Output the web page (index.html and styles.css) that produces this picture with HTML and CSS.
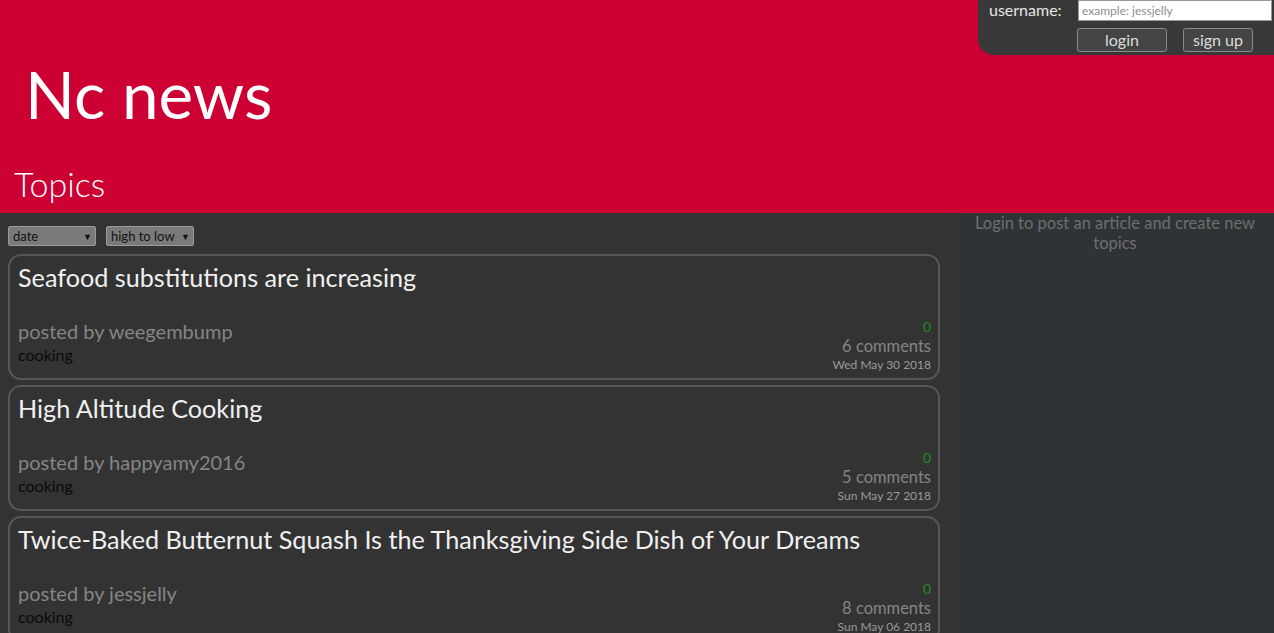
FILE: index.html
```html
<!DOCTYPE html>
<html>
<head>
<meta charset="utf-8">
<link rel="stylesheet" href="styles.css">
</head>
<body>
<header class="header">
  <h1 class="brand">Nc news</h1>
  <h2 class="topics">Topics</h2>
  <div class="login">
    <div class="login-row">
      <label class="login-label">username:</label>
      <input class="login-input" type="text" placeholder="example: jessjelly">
    </div>
    <div class="login-buttons">
      <button class="btn btn-login">login</button>
      <button class="btn btn-signup">sign up</button>
    </div>
  </div>
</header>
<div class="main">
  <section class="articles">
    <div class="sorts">
      <div class="select sel-date"><span>date</span><span class="arrow">&#9660;</span></div>
      <div class="select sel-order"><span>high to low</span><span class="arrow">&#9660;</span></div>
    </div>
    <article class="card">
      <h3 class="title">Seafood substitutions are increasing</h3>
      <div class="card-bottom">
        <div class="meta">
          <div class="author">posted by weegembump</div>
          <div class="topic">cooking</div>
        </div>
        <div class="stats">
          <div class="votes">0</div>
          <div class="comments">6 comments</div>
          <div class="date">Wed May 30 2018</div>
        </div>
      </div>
    </article>
    <article class="card">
      <h3 class="title">High Altitude Cooking</h3>
      <div class="card-bottom">
        <div class="meta">
          <div class="author">posted by happyamy2016</div>
          <div class="topic">cooking</div>
        </div>
        <div class="stats">
          <div class="votes">0</div>
          <div class="comments">5 comments</div>
          <div class="date">Sun May 27 2018</div>
        </div>
      </div>
    </article>
    <article class="card">
      <h3 class="title">Twice-Baked Butternut Squash Is the Thanksgiving Side Dish of Your Dreams</h3>
      <div class="card-bottom">
        <div class="meta">
          <div class="author">posted by jessjelly</div>
          <div class="topic">cooking</div>
        </div>
        <div class="stats">
          <div class="votes">0</div>
          <div class="comments">8 comments</div>
          <div class="date">Sun May 06 2018</div>
        </div>
      </div>
    </article>
  </section>
  <aside class="side">Login to post an article and create new topics</aside>
</div>
</body>
</html>
```
FILE: styles.css
```css
* { box-sizing: border-box; }
html, body { margin: 0; padding: 0; }
body {
  font-family: Lato, "Open Sans", sans-serif;
  background: #333333;
  height: 633px;
  overflow: hidden;
}
.header {
  position: relative;
  background: #cc0033;
  height: 213px;
  padding-top: 54px;
}
.brand {
  margin: 0 0 0 25px;
  font-size: 65.5px;
  font-weight: 400;
  color: #ffffff;
  line-height: 80px;
}
.topics {
  margin: 30px 0 0 14px;
  font-size: 34px;
  font-weight: 300;
  color: #ffffff;
  line-height: 40px;
}
.login {
  position: absolute;
  top: 0;
  right: 0;
  width: 296px;
  height: 55px;
  background: #383838;
  border-bottom-left-radius: 16px;
  padding-left: 11px;
}
.login-row {
  display: flex;
  align-items: center;
  height: 21px;
}
.login-label {
  color: #e6e6e6;
  font-size: 16px;
  width: 89px;
  padding-bottom: 2px;
}
.login-input {
  width: 194px;
  height: 21px;
  border: 1px solid #999;
  background: #fff;
  font-family: inherit;
  font-size: 12px;
  padding: 0 3px;
  margin: 0;
}
.login-input::placeholder { color: #8c8c8c; }
.login-buttons {
  display: flex;
  gap: 16px;
  margin-top: 7px;
  padding-left: 88px;
}
.btn {
  height: 24px;
  background: #444;
  color: #dcdcdc;
  border: 1px solid #8a8a8a;
  border-radius: 3px;
  font-family: inherit;
  font-size: 16px;
  padding: 0;
  line-height: 20px;
}
.btn-login { width: 90px; }
.btn-signup { width: 70px; }
.main {
  display: flex;
  height: 420px;
}
.articles {
  width: 956px;
  background: #333333;
  padding: 13px 16px 0 8px;
}
.sorts {
  display: flex;
  gap: 10px;
  margin-bottom: 8px;
}
.select {
  display: flex;
  justify-content: space-between;
  align-items: center;
  height: 20px;
  background: #7a7a7a;
  border: 1px solid #9a9a9a;
  border-radius: 2px;
  color: #111;
  font-size: 13px;
  padding: 0 3px 0 4px;
}
.sel-date { width: 88px; }
.sel-order { width: 88px; }
.arrow { font-size: 9px; }
.card {
  height: 126px;
  border: 2px solid #575757;
  border-radius: 13px;
  margin-bottom: 5px;
  padding: 4px 7px 0 8px;
  display: flex;
  flex-direction: column;
}
.title {
  margin: 0;
  font-size: 25.2px;
  font-weight: 400;
  color: #f0f0f0;
  line-height: 34px;
}
.card-bottom {
  margin-top: auto;
  display: flex;
  justify-content: space-between;
  align-items: flex-end;
  padding-bottom: 5px;
}
.meta { padding-bottom: 7px; }
.author {
  color: #858585;
  font-size: 20px;
  line-height: 26px;
}
.topic {
  color: #0a0a0a;
  font-size: 16px;
  line-height: 22px;
}
.stats {
  text-align: right;
}
.votes {
  color: #228b22;
  font-size: 14px;
  line-height: 19px;
}
.comments {
  color: #858585;
  font-size: 16.5px;
  line-height: 20px;
}
.date {
  color: #9a9a9a;
  font-size: 12px;
  line-height: 17px;
}
.side {
  flex: 1;
  background: #2e3335;
  color: #6e6e6e;
  font-size: 16.5px;
  text-align: center;
  padding: 0 10px 0;
  line-height: 20px;
}
```
